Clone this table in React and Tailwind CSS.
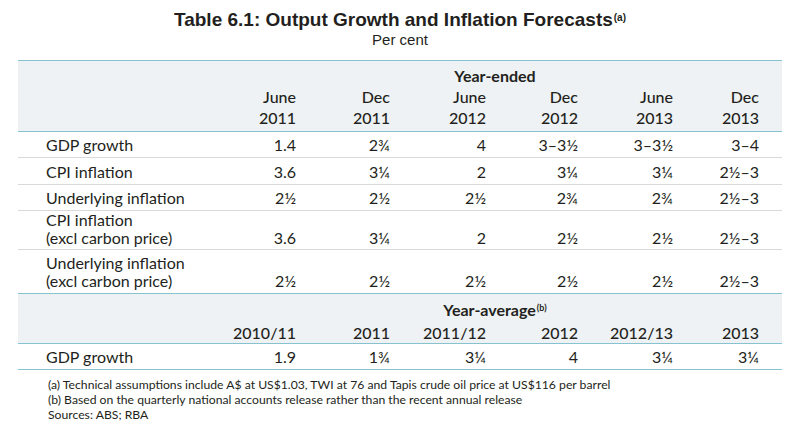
const cols = 'grid grid-cols-[184px_94px_94px_96px_92px_95px_86px] pr-[23px]';

const ended = [
  { label: ['GDP growth'], vals: ['1.4', '2¾', '4', '3–3½', '3–3½', '3–4'], h: 'h-[26px]' },
  { label: ['CPI inflation'], vals: ['3.6', '3¼', '2', '3¼', '3¼', '2½–3'], h: 'h-[27px]' },
  { label: ['Underlying inflation'], vals: ['2½', '2½', '2½', '2¾', '2¾', '2½–3'], h: 'h-[26px]' },
  { label: ['CPI inflation', '(excl carbon price)'], vals: ['3.6', '3¼', '2', '2½', '2½', '2½–3'], h: 'h-[39px]' },
  { label: ['Underlying inflation', '(excl carbon price)'], vals: ['2½', '2½', '2½', '2½', '2½', '2½–3'], h: 'h-[44px]', last: true },
];

function Row({ label, vals, h, last }) {
  return (
    <div className={`${cols} ${h} items-end pb-[3px] border-b ${last ? 'border-[#86c2d0]' : 'border-[#d9d9d9]'}`}>
      <div className="pl-[28px] leading-[18px]">
        {label.map(l => <div key={l}>{l}</div>)}
      </div>
      {vals.map((v, i) => (
        <div key={i} className="text-right leading-[18px]">{v}</div>
      ))}
    </div>
  );
}

export default function App() {
  return (
    <div className="w-[810px] h-[445px] bg-white text-[#231f20] pt-[9px]">
      {/* Title */}
      <div className="w-[764px] ml-[18px] text-center font-['Liberation_Sans',Arial,sans-serif]">
        <h1 className="text-[19px] leading-[22px] font-bold">
          Table 6.1: Output Growth and Inflation Forecasts
          <span className="text-[10px] leading-none font-bold align-[5px] ml-[1px]">(a)</span>
        </h1>
        <p className="text-[15px] leading-[18px]">Per cent</p>
      </div>

      {/* Table */}
      <div className="w-[764px] ml-[18px] mt-[11px] font-['Lato',sans-serif] text-[16px]">
        {/* Year-ended header */}
        <div className="bg-[#eef2f4] border-y border-[#86c2d0] h-[72px] pt-[4px]">
          <div className="pl-[190px] text-center font-bold leading-[21px]">Year-ended</div>
          <div className={`${cols} font-medium leading-[21px]`}>
            <div />
            {['June', 'Dec', 'June', 'Dec', 'June', 'Dec'].map((m, i) => (
              <div key={i} className="text-right">{m}</div>
            ))}
          </div>
          <div className={`${cols} font-medium leading-[22px]`}>
            <div />
            {['2011', '2011', '2012', '2012', '2013', '2013'].map((y, i) => (
              <div key={i} className="text-right">{y}</div>
            ))}
          </div>
        </div>

        {ended.map(r => <Row key={r.label.join()} {...r} />)}

        {/* Year-average header */}
        <div className="bg-[#eef2f4] border-b border-[#86c2d0] h-[50px] flex flex-col justify-end">
          <div className="pl-[190px] text-center font-bold leading-[21px] mb-[2px]">
            Year-average<span className="text-[9px] leading-none align-[5px] ml-[1px]">(b)</span>
          </div>
          <div className={`${cols} font-medium leading-[21px]`}>
            <div />
            {['2010/11', '2011', '2011/12', '2012', '2012/13', '2013'].map((y, i) => (
              <div key={i} className="text-right">{y}</div>
            ))}
          </div>
        </div>

        <Row label={['GDP growth']} vals={['1.9', '1¾', '3¼', '4', '3¼', '3¼']} h="h-[26px]" last />

        {/* Footnotes */}
        <div className="pl-[30px] mt-[7px] text-[12.2px] leading-[15px]">
          <p>(a) Technical assumptions include A$ at US$1.03, TWI at 76 and Tapis crude oil price at US$116 per barrel</p>
          <p>(b) Based on the quarterly national accounts release rather than the recent annual release</p>
          <p>Sources: ABS; RBA</p>
        </div>
      </div>
    </div>
  );
}
